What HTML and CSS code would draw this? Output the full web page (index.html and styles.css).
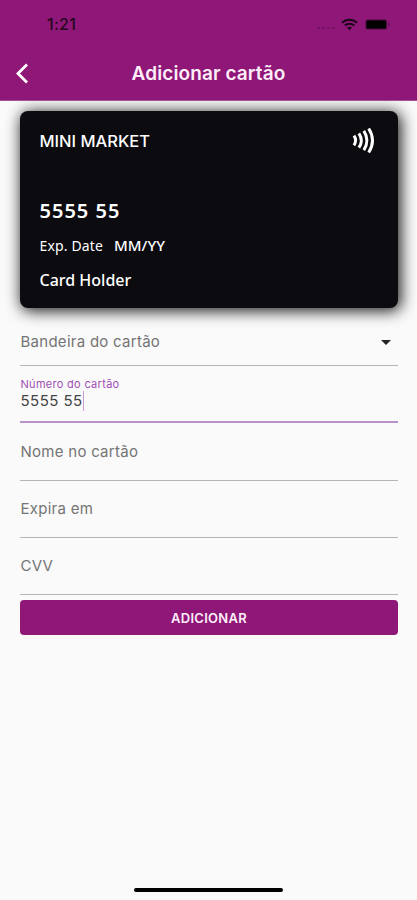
FILE: index.html
```html
<!DOCTYPE html>
<html lang="pt-BR">
<head>
<meta charset="UTF-8">
<meta name="viewport" content="width=device-width, initial-scale=1">
<title>Adicionar cartão</title>
<link rel="stylesheet" href="styles.css">
</head>
<body>
    <div class="screen">
        <header class="header">
            <div class="status">
                <span class="time">1:21</span>
                <div class="status-icons">
                    <span class="signal"><i></i><i></i><i></i><i></i></span>
                    <svg class="wifi" width="17" height="13" viewBox="0 0 17 13" fill="none" stroke="#1d0718" stroke-width="2">
                        <path d="M1 4.8C5.2.6 11.8.6 16 4.8"/>
                        <path d="M3.8 7.6c2.7-2.5 6.7-2.5 9.4 0"/>
                        <path d="M6 9.6c1.5-1.2 3.5-1.2 5 0L8.5 12.2z" fill="#1d0718" stroke="none"/>
                    </svg>
                    <svg class="battery" width="26" height="11" viewBox="0 0 26 11">
                        <rect x=".5" y=".5" width="21.5" height="10" rx="2" fill="#4b0d40"/>
                        <rect x="1.5" y="1.5" width="19.5" height="8" rx="1" fill="#000"/>
                        <path d="M23.3 3.5c2 .7 2 3.3 0 4z" fill="#5b104e"/>
                    </svg>
                </div>
            </div>
            <div class="nav">
                <svg class="back" width="14" height="22" viewBox="0 0 14 22" fill="none" stroke="#fff" stroke-width="2.8">
                    <path d="M12 2.500L3 11.500l9 9"/>
                </svg>
                <h1 class="title">Adicionar cartão</h1>
            </div>
        </header>
        <main class="content">
            <section class="card">
                <div class="card-top">
                    <span class="card-bank">MINI MARKET</span>
                    <svg width="24" height="28" viewBox="0 0 24 28" fill="none" stroke="#fff" stroke-width="3">
                        <path d="M2 8.700q3.200 4.800 0 9.600"/>
                        <path d="M6.900 6.300q4.800 7.200 0 14.400"/>
                        <path d="M11.800 3.900q6.200 9.600 0 19.200"/>
                        <path d="M16.700 1.500q7.600 12 0 24"/>
                    </svg>
                </div>
                <div class="card-number">5555 55</div>
                <div class="card-exp"><span class="card-exp-label">Exp. Date</span><span class="card-exp-value">MM/YY</span></div>
                <div class="card-holder">Card Holder</div>
            </section>
            <form class="form">
                <div class="field field-select">
                    <span class="label">Bandeira do cartão</span>
                    <span class="arrow"></span>
                </div>
                <div class="field field-active">
                    <span class="label-small">Número do cartão</span>
                    <span class="value">5555 55</span>
                </div>
                <div class="field"><span class="label">Nome no cartão</span></div>
                <div class="field"><span class="label">Expira em</span></div>
                <div class="field"><span class="label">CVV</span></div>
                <button class="btn" type="button">ADICIONAR</button>
            </form>
        </main>
        <div class="home-bar"></div>
    </div>
</body>
</html>
```
FILE: styles.css
```css
* {
    margin: 0;
    padding: 0;
    box-sizing: border-box;
}
body {
    background: #fafafa;
    font-family: Inter, "Liberation Sans", sans-serif;
}
.screen {
    display: flex;
    flex-direction: column;
    height: 900px;
    overflow: hidden;
}
.header {
    height: 101px;
    background: #8f1777;
    border-bottom: 1px solid #a1528f;
    position: relative;
    z-index: 1;
}
.status {
    display: flex;
    justify-content: space-between;
    align-items: center;
    height: 48px;
    padding: 0 26px 0 47px;
}
.time {
    color: #260720;
    font-size: 16px;
    font-weight: 500;
    line-height: 20px;
    letter-spacing: .3px;
}
.status-icons {
    display: flex;
    align-items: center;
}
.signal {
    display: flex;
    gap: 2px;
    margin: 8px 6px 0 0;
}
.signal i {
    width: 3px;
    height: 2px;
    border-radius: 1px;
    background: #741260;
}
.wifi {
    margin-right: 7px;
}
.nav {
    display: flex;
    align-items: center;
    height: 50px;
    padding: 0 15px;
}
.back {
    flex: none;
}
.title {
    flex: 1;
    margin: 2px 14px 0 0;
    color: #fdeefa;
    font-size: 19px;
    font-weight: 600;
    line-height: 24px;
    letter-spacing: .1px;
    text-align: center;
}
.content {
    flex: 1;
    padding: 10px 19px 0 20px;
}
.card {
    height: 197px;
    padding: 15px 22px 0 19.5px;
    border-radius: 8px;
    background: #0c0b10;
    box-shadow: 2px 2px 15px 1px rgba(0, 0, 0, .9);
    color: #fff;
    font-family: "Noto Sans", sans-serif;
}
.card-top {
    display: flex;
    justify-content: space-between;
    align-items: center;
    height: 29px;
}
.card-bank {
    font-family: Inter, sans-serif;
    font-size: 16.5px;
    font-weight: 500;
}
.card-number {
    margin-top: 42px;
    font-size: 20px;
    font-weight: 600;
    line-height: 28px;
    letter-spacing: 1px;
}
.card-exp {
    display: flex;
    align-items: center;
    gap: 11px;
    height: 20px;
    margin-top: 10px;
}
.card-exp-label {
    font-size: 14px;
    letter-spacing: .15px;
}
.card-exp-value {
    font-size: 15px;
    font-weight: 500;
}
.card-holder {
    margin-top: 14px;
    font-size: 16px;
    font-weight: 500;
    line-height: 22px;
}
.form {
    display: flex;
    flex-direction: column;
}
.field {
    display: flex;
    justify-content: space-between;
    height: 57.3px;
    padding: 17.5px 0 0 .5px;
    border-bottom: 1px solid #b5b5b5;
}
.field-select {
    height: 58px;
    padding-top: 23px;
}
.label {
    color: #747474;
    font-size: 15px;
    line-height: 22px;
    letter-spacing: .27px;
}
.arrow {
    width: 0;
    height: 0;
    margin: 9px 7px 0 0;
    border: 5px solid transparent;
    border-top-color: #222;
    border-bottom: 0;
}
.field-active {
    flex-direction: column;
    justify-content: flex-start;
    align-items: flex-start;
    padding-top: 11px;
    border-bottom: 2px solid #b992c9;
}
.label-small {
    color: #a14fb5;
    font-size: 11px;
    line-height: 14px;
    letter-spacing: .3px;
}
.value {
    border-right: 1px solid #c99fd6;
    color: #444;
    font-size: 15px;
    line-height: 20px;
    letter-spacing: .45px;
}
.btn {
    height: 35px;
    margin-top: 5px;
    border: 0;
    border-radius: 4px;
    background: #8f1777;
    color: #fdeefa;
    font-family: Inter, sans-serif;
    font-size: 13px;
    font-weight: 600;
    letter-spacing: .3px;
}
.home-bar {
    width: 149px;
    height: 4px;
    margin: 0 auto 8px;
    border-radius: 2px;
    background: #000;
}
```
